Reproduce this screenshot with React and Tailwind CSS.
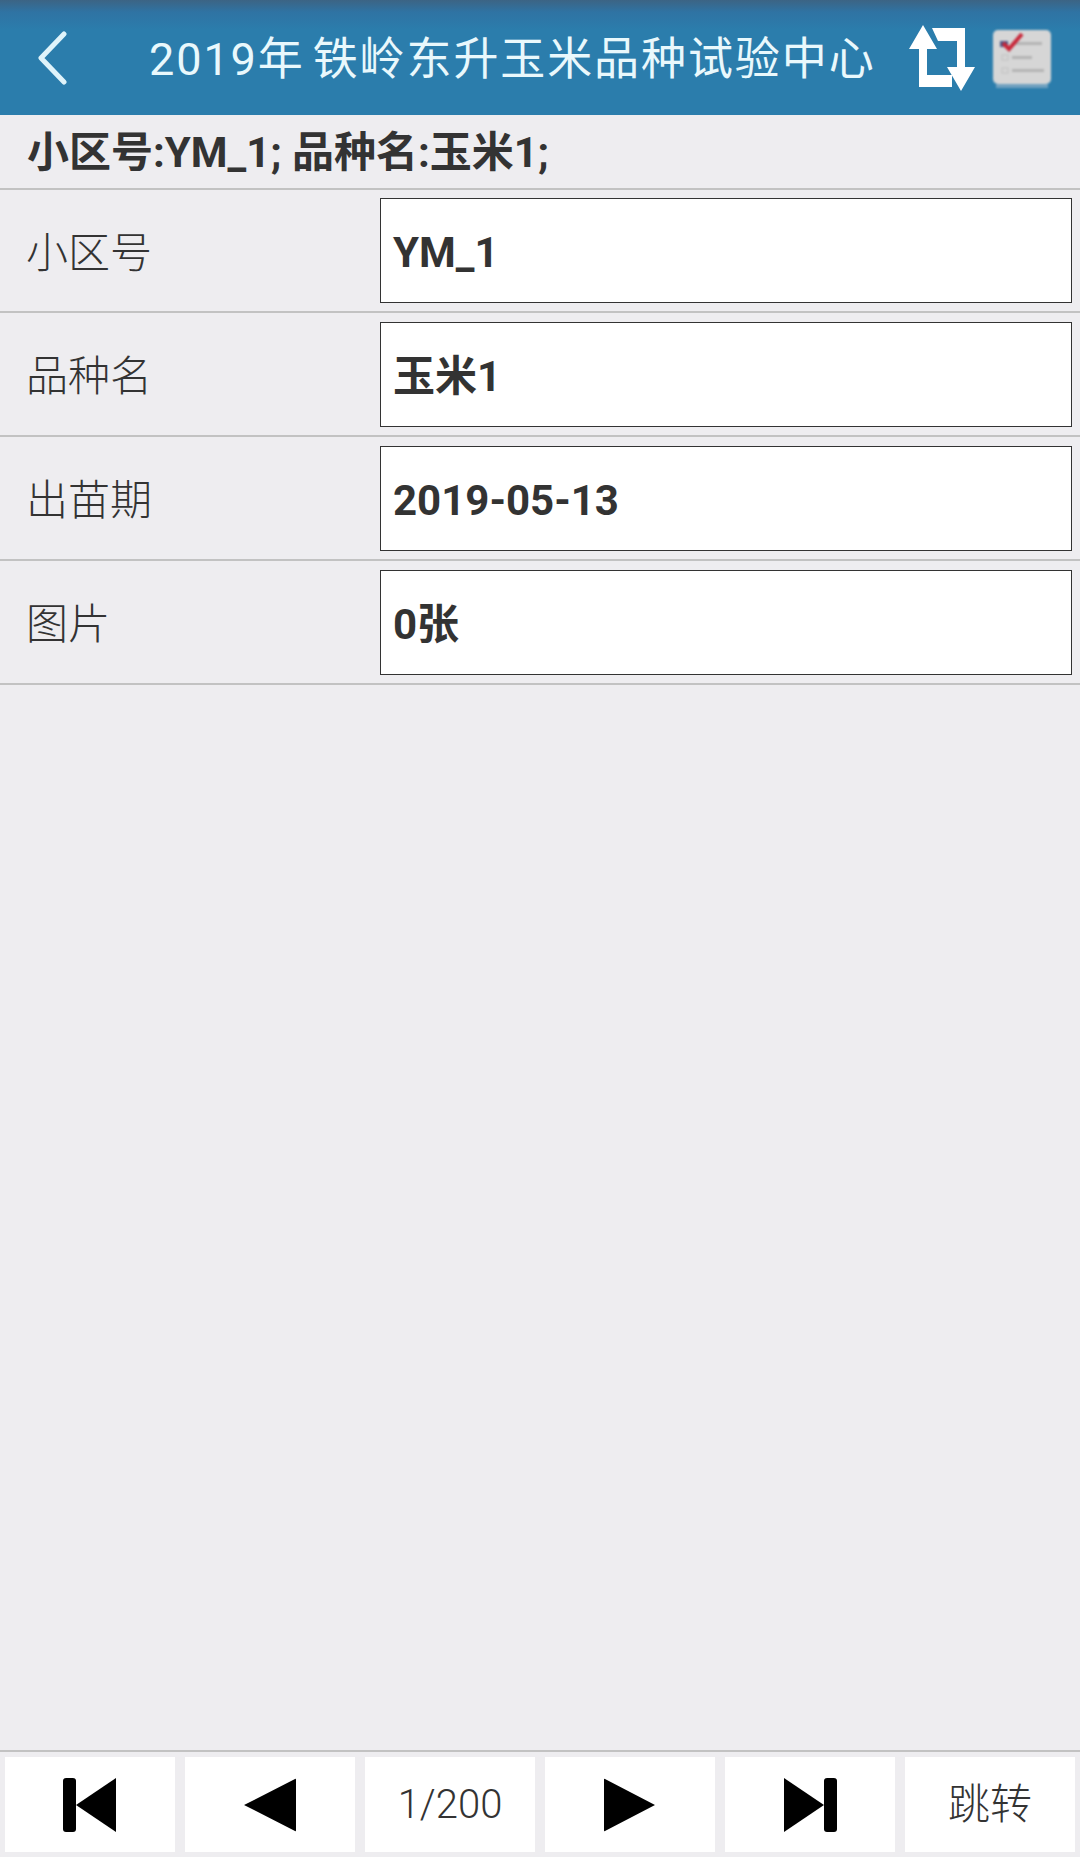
const fontStack = 'font-["Roboto","Noto_Sans_CJK_SC",sans-serif]';

const rows = [
  { label: "小区号", value: "YM_1", height: "h-[123px]" },
  { label: "品种名", value: "玉米1", height: "h-[124px]" },
  { label: "出苗期", value: "2019-05-13", height: "h-[124px]" },
  { label: "图片", value: "0张", height: "h-[124px]" },
];

function RetweetIcon() {
  return (
    <svg width="68" height="68" viewBox="0 0 68 68" fill="#fff">
      <path d="M15 0 L29 24 L19 24 L19 50 L44 50 L44 62 L11 62 L11 24 L1 24 Z" />
      <path d="M24 3 L57 3 L57 42 L67 42 L53 66 L39 42 L49 42 L49 16 L30 16 Z" />
    </svg>
  );
}

function ChecklistIcon() {
  return (
    <svg width="60" height="62" viewBox="0 0 60 62" className="blur-[1.2px]">
      <rect x="1" y="2" width="58" height="54" rx="5" fill="#d6d6d6" />
      <rect x="4" y="56" width="52" height="4" fill="#c5cfd6" opacity="0.45" />
      <rect x="8" y="13" width="8" height="6" fill="#4a5a8a" />
      <rect x="20" y="14" width="30" height="3" fill="#b4b4b4" />
      <rect x="20" y="28" width="20" height="3" fill="#b4b4b4" />
      <rect x="20" y="41" width="32" height="3" fill="#b4b4b4" />
      <rect x="10" y="27" width="6" height="5" fill="none" stroke="#c0c0c0" />
      <rect x="10" y="40" width="6" height="5" fill="none" stroke="#c0c0c0" />
      <path d="M11 15 L17 21 L30 6" fill="none" stroke="#c8283a" strokeWidth="4" />
    </svg>
  );
}

function NavIcon({ type }) {
  return (
    <svg width="54" height="54" viewBox="0 0 54 54" fill="#000">
      {type === "first" && (
        <>
          <rect x="0" y="0" width="13" height="54" rx="3" />
          <path d="M13 27 L53 0 L53 54 Z" />
        </>
      )}
      {type === "prev" && <path d="M1 27 L52 1 Q53 0 53 2 L53 52 Q53 54 52 53 Z" />}
      {type === "next" && <path d="M1 2 Q1 0 2 1 L52 27 L2 53 Q1 54 1 52 Z" />}
      {type === "last" && (
        <>
          <path d="M1 0 L41 27 L1 54 Z" />
          <rect x="41" y="0" width="13" height="54" rx="3" />
        </>
      )}
    </svg>
  );
}

export default function App() {
  return (
    <div className={`flex h-[1857px] w-[1080px] flex-col bg-[#eeedf0] text-[#333] ${fontStack}`}>
      {/* Header */}
      <div className="flex h-[115px] shrink-0 items-center bg-[linear-gradient(to_bottom,#3c6484_0px,#2f73a3_12px,#2b7dac_30px,#2b7dac_100%)] pb-[1px]">
        <svg width="30" height="54" viewBox="0 0 30 54" fill="none" className="ml-[37px] mt-[1px] shrink-0">
          <path d="M27 3 L4 27 L27 51" stroke="#dff3fa" strokeWidth="5" strokeLinecap="round" strokeLinejoin="round" />
        </svg>
        <div className="ml-[82px] mt-[4px] whitespace-nowrap text-[45px] leading-none tracking-[1.9px] [word-spacing:-5px] text-[#e9f8fc]">2019年 铁岭东升玉米品种试验中心</div>
        <div className="ml-auto flex items-center">
          <div className="mt-[4px]">
            <RetweetIcon />
          </div>
          <div className="ml-[16px] mr-[28px] mt-[4px]">
            <ChecklistIcon />
          </div>
        </div>
      </div>

      {/* Summary */}
      <div className="flex h-[75px] shrink-0 items-center border-b-2 border-[#c2c2c2] pl-[27px] pt-[3px] text-[42px] font-bold leading-none">
        小区号:YM_1; 品种名:玉米1;
      </div>

      {/* Fields */}
      {rows.map((row) => (
        <div key={row.label} className={`flex ${row.height} shrink-0 items-center border-b-2 border-[#c2c2c2] pr-[8px]`}>
          <div className="w-[380px] pl-[26px] pt-[6px] text-[42px] font-light leading-none">{row.label}</div>
          <div className="flex h-[105px] flex-1 items-center border border-[#333] bg-white pl-[12px] pt-[5px] text-[42px] font-bold leading-none">
            {row.value}
          </div>
        </div>
      ))}

      <div className="flex-1" />

      {/* Pager */}
      <div className="grid h-[107px] shrink-0 grid-cols-6 gap-[10px] border-t-2 border-[#c2c2c2] px-[5px] pb-[5px] pt-[5px]">
        <div className="flex items-center justify-center bg-white"><NavIcon type="first" /></div>
        <div className="flex items-center justify-center bg-white"><NavIcon type="prev" /></div>
        <div className="flex items-center justify-center bg-white text-[40px] font-light leading-none">1/200</div>
        <div className="flex items-center justify-center bg-white"><NavIcon type="next" /></div>
        <div className="flex items-center justify-center bg-white"><NavIcon type="last" /></div>
        <div className="flex items-center justify-center bg-white text-[42px] font-light leading-none">跳转</div>
      </div>
    </div>
  );
}
